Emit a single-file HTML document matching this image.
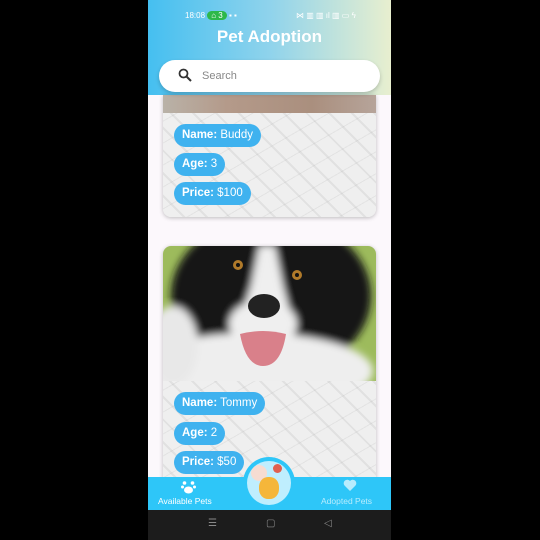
<!DOCTYPE html>
<html><head><meta charset="utf-8"><style>
*{margin:0;padding:0;box-sizing:border-box}
body{width:540px;height:540px;background:#000;position:relative;overflow:hidden;font-family:"Liberation Sans",sans-serif}
#s{position:absolute;left:148px;top:0;width:243px;height:540px;background:#fcf8fc;overflow:hidden}
.hdr{position:absolute;left:0;top:0;width:243px;height:95px;background:linear-gradient(90deg,#45bff0 0%,#8fd3ec 50%,#e8efcf 100%)}
.st{position:absolute;top:11px;left:37px;font-size:8px;color:#fff}
.title{position:absolute;top:27px;width:100%;text-align:center;color:#fff;font-weight:bold;font-size:17px}
.search{position:absolute;left:11px;top:60px;width:221px;height:32px;background:#fff;border-radius:16px;box-shadow:0 2px 4px rgba(0,0,0,.2)}
.search span{position:absolute;left:43px;top:10px;font-size:11px;color:#888}
.card{position:absolute;left:15px;width:213px;border-radius:8px;overflow:hidden;box-shadow:0 1px 4px rgba(0,0,0,.25);background:#efefef}
.pat{position:absolute;left:0;right:0;bottom:0;background-color:#efefef;background-image:repeating-linear-gradient(45deg,transparent 0 14px,rgba(160,160,160,.18) 14px 16px),repeating-linear-gradient(-30deg,transparent 0 18px,rgba(160,160,160,.15) 18px 19px)}
.pill{position:absolute;left:11px;height:23px;background:#3fb2ef;border-radius:12px;color:#fff;font-size:11.5px;line-height:23px;padding:0 8px}
.pill b{font-weight:bold}
.nav{position:absolute;left:0;top:477px;width:243px;height:33px;background:#2ec6f8}
.sys{position:absolute;left:0;top:510px;width:243px;height:30px;background:#1c1c1c;color:#888;font-size:10px}
</style></head><body><div id="s">
<div class="hdr"></div>
<div class="st">18:08 <span style="background:#2db84a;border-radius:5px;padding:0 4px">⌂ 3</span> ▪ ▪</div>
<div class="st" style="left:148px">⋈ ▥ ▥ ıl ▥ ▭ ϟ</div>
<div class="title">Pet Adoption</div>

<div class="card" style="top:95px;height:122px;border-radius:0 0 8px 8px">
<div style="height:18px;background:linear-gradient(90deg,#b9b2a8 0%,#b49a8a 30%,#aa8f7e 70%,#b6a49a 100%)"></div>
<div class="pat" style="top:18px"></div>
<div class="pill" style="top:29px"><b>Name:</b> Buddy</div>
<div class="pill" style="top:58px"><b>Age:</b> 3</div>
<div class="pill" style="top:87px"><b>Price:</b> $100</div>
</div>
<div class="search"><svg style="position:absolute;left:19px;top:8px" width="14" height="14" viewBox="0 0 14 14"><circle cx="5.5" cy="5.5" r="4" fill="none" stroke="#333" stroke-width="1.8"/><path d="M8.5 8.5L13 13" stroke="#333" stroke-width="2"/></svg><span>Search</span></div>

<div class="card" style="top:246px;height:240px">
<svg width="213" height="135" viewBox="0 0 213 135" style="display:block">
<defs><filter id="b"><feGaussianBlur stdDeviation="4"/></filter></defs>
<rect width="213" height="135" fill="#9dbb5c"/>
<g filter="url(#b)">
<ellipse cx="108" cy="50" rx="100" ry="80" fill="#161616"/>
<ellipse cx="90" cy="125" rx="120" ry="38" fill="#eeeeee"/>
<ellipse cx="10" cy="100" rx="25" ry="40" fill="#e8e8e8"/>
<path d="M96 0 L112 0 L120 40 L128 70 L78 70 L88 40 Z" fill="#efefef"/>
<ellipse cx="100" cy="78" rx="34" ry="24" fill="#efefef"/>
</g>
<ellipse cx="75" cy="19" rx="5" ry="5" fill="#b07a2a"/><circle cx="75" cy="19" r="2" fill="#111"/>
<ellipse cx="134" cy="29" rx="5" ry="5" fill="#b07a2a"/><circle cx="134" cy="29" r="2" fill="#111"/>
<ellipse cx="101" cy="60" rx="16" ry="12" fill="#222"/>
<path d="M77 88 Q100 82 123 88 Q118 120 100 120 Q83 120 77 88Z" fill="#d9808a"/>
</svg>
<div class="pat" style="top:135px"></div>
<div class="pill" style="top:146px"><b>Name:</b> Tommy</div>
<div class="pill" style="top:176px"><b>Age:</b> 2</div>
<div class="pill" style="top:205px"><b>Price:</b> $50</div>
</div>

<div class="nav">
<svg style="position:absolute;left:33px;top:3px" width="15" height="14" viewBox="0 0 15 14" fill="#fff"><ellipse cx="7.5" cy="10" rx="4.5" ry="3.5"/><circle cx="3.5" cy="3" r="1.8"/><circle cx="11.5" cy="3" r="1.8"/><circle cx="1.5" cy="7" r="1.5"/><circle cx="13.5" cy="7" r="1.5"/></svg>
<div style="position:absolute;left:10px;top:19px;color:#fff;font-size:8.5px">Available Pets</div>
<svg style="position:absolute;left:195px;top:2px" width="14" height="13" viewBox="0 0 14 13"><path d="M7 12 L1.5 6.5 A3.2 3.2 0 0 1 7 2 A3.2 3.2 0 0 1 12.5 6.5 Z" fill="#b8ecfd"/></svg>
<div style="position:absolute;left:173px;top:19px;color:#b8ecfd;font-size:8.5px">Adopted Pets</div>
</div>
<div style="position:absolute;left:95px;top:457px;width:52px;height:52px;border-radius:50%;background:#2ec6f8"></div>
<div style="position:absolute;left:99px;top:461px;width:44px;height:44px;border-radius:50%;background:#bfeefe;overflow:hidden">
<div style="position:absolute;left:4px;top:4px;width:16px;height:16px;border-radius:50%;background:#f6dcd2"></div>
<div style="position:absolute;left:12px;top:16px;width:20px;height:22px;border-radius:45%;background:#f5b63a"></div>
<div style="position:absolute;left:26px;top:3px;width:9px;height:9px;border-radius:50%;background:#e0604f"></div>
</div>
<div class="sys"><span style="position:absolute;left:60px;top:8px">☰</span><span style="position:absolute;left:118px;top:8px">▢</span><span style="position:absolute;left:176px;top:8px">◁</span></div>
</div></body></html>
